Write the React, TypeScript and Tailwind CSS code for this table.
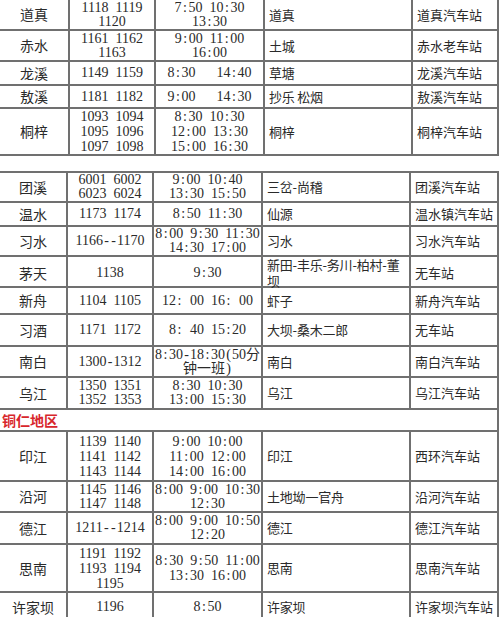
type Row = {
  h: number;
  name: string;
  nums: string[];
  times: string[];
  via: string[];
  station: string;
};

const zunyi: Row[] = [
  { h: 31, name: "道真", nums: ["1118 1119", "1120"], times: ["7:50 10:30", "13:30"], via: ["道真"], station: "道真汽车站" },
  { h: 31, name: "赤水", nums: ["1161 1162", "1163"], times: ["9:00 11:00", "16:00"], via: ["土城"], station: "赤水老车站" },
  { h: 24, name: "龙溪", nums: ["1149 1159"], times: ["8:30   14:40"], via: ["草塘"], station: "龙溪汽车站" },
  { h: 23, name: "敖溪", nums: ["1181 1182"], times: ["9:00   14:30"], via: ["抄乐 松烟"], station: "敖溪汽车站" },
  { h: 47, name: "桐梓", nums: ["1093 1094", "1095 1096", "1097 1098"], times: ["8:30 10:30", "12:00 13:30", "15:00 16:30"], via: ["桐梓"], station: "桐梓汽车站" },
];

const zunyi2: Row[] = [
  { h: 30, name: "团溪", nums: ["6001 6002", "6023 6024"], times: ["9:00 10:40", "13:30 15:50"], via: ["三岔-尚稽"], station: "团溪汽车站" },
  { h: 24, name: "温水", nums: ["1173 1174"], times: ["8:50 11:30"], via: ["仙源"], station: "温水镇汽车站" },
  { h: 30, name: "习水", nums: ["1166--1170"], times: ["8:00 9:30 11:30", "14:30 17:00"], via: ["习水"], station: "习水汽车站" },
  { h: 31, name: "茅天", nums: ["1138"], times: ["9:30"], via: ["新田-丰乐-务川-柏村-董", "坝"], station: "无车站" },
  { h: 27, name: "新舟", nums: ["1104 1105"], times: ["12: 00 16: 00"], via: ["虾子"], station: "新舟汽车站" },
  { h: 32, name: "习酒", nums: ["1171 1172"], times: ["8: 40 15:20"], via: ["大坝-桑木二郎"], station: "无车站" },
  { h: 31, name: "南白", nums: ["1300-1312"], times: ["8:30-18:30(50分", "钟一班)"], via: ["南白"], station: "南白汽车站" },
  { h: 32, name: "乌江", nums: ["1350 1351", "1352 1353"], times: ["8:30 10:30", "13:00 15:30"], via: ["乌江"], station: "乌江汽车站" },
];

const tongren: Row[] = [
  { h: 50, name: "印江", nums: ["1139 1140", "1141 1142", "1143 1144"], times: ["9:00 10:00", "11:00 12:00", "14:00 16:00"], via: ["印江"], station: "西环汽车站" },
  { h: 31, name: "沿河", nums: ["1145 1146", "1147 1148"], times: ["8:00 9:00 10:30", "12:30"], via: ["土地坳一官舟"], station: "沿河汽车站" },
  { h: 32, name: "德江", nums: ["1211--1214"], times: ["8:00 9:00 10:50", "12:20"], via: ["德江"], station: "德江汽车站" },
  { h: 48, name: "思南", nums: ["1191 1192", "1193 1194", "1195"], times: ["8:30 9:50 11:00", "13:30 16:00"], via: ["思南"], station: "思南汽车站" },
  { h: 30, name: "许家坝", nums: ["1196"], times: ["8:50"], via: ["许家坝"], station: "许家坝汽车站" },
];

// digits in Liberation Serif are 7px at 14px; pad the rest to the same width
function Mono({ text }: { text: string }) {
  return (
    <>
      {text.split("").map((ch, i) =>
        /[0-9]/.test(ch) || /[\u4e00-\u9fff]/.test(ch) ? (
          ch
        ) : (
          <span key={i} className="inline-block w-[7px] text-center">
            {ch === " " ? "\u00a0" : ch}
          </span>
        )
      )}
    </>
  );
}

function TableRow({ row, cols }: { row: Row; cols: string }) {
  const cell = "border-r-2 border-[#707070] flex flex-col justify-center whitespace-nowrap";
  const lead = row.nums.length > 2 || row.times.length > 2 ? "leading-[15px]" : "leading-[14px]";
  return (
    <div className={`grid ${cols} border-b-2 border-[#707070]`} style={{ height: row.h }}>
      <div className={`${cell} items-center text-[14px]`}>{row.name}</div>
      <div className={`${cell} items-center font-['Liberation_Serif','Noto_Sans_CJK_SC',serif] text-[14px] ${lead}`}>
        {row.nums.map((n) => (
          <div key={n}>
            <Mono text={n} />
          </div>
        ))}
      </div>
      <div className={`${cell} items-center font-['Liberation_Serif','Noto_Sans_CJK_SC',serif] text-[14px] ${lead}`}>
        {row.times.map((t) => (
          <div key={t}>
            <Mono text={t} />
          </div>
        ))}
      </div>
      <div className={`${cell} pl-[4px] text-[13px] leading-[16px] tracking-[-0.2px]`}>
        <p>
          {row.via.map((v, i) => (
            <span key={v}>
              {i > 0 && <br />}
              {v}
            </span>
          ))}
        </p>
      </div>
      <div className="flex flex-col justify-center pl-[4px] text-[13px] whitespace-nowrap">
        {row.station}
      </div>
    </div>
  );
}

export default function App() {
  const topCols = "grid-cols-[70px_86px_109px_148px_1fr]";
  const cols = "grid-cols-[68px_86px_109px_148px_1fr]";
  return (
    <div className="w-[500px] h-[617px] overflow-hidden bg-white text-[#2a2a2a] font-['Noto_Sans_CJK_SC',sans-serif]">
      <div className="w-[499px] border-r-2 border-[#707070]">
        {zunyi.map((r) => (
          <TableRow key={r.name} row={r} cols={topCols} />
        ))}
      </div>

      <div className="mt-[15px] w-[499px] border-t-2 border-r-2 border-[#707070]">
        {zunyi2.map((r) => (
          <TableRow key={r.name} row={r} cols={cols} />
        ))}
        <div className="h-[22px] flex items-center pl-[2px] border-b-2 border-[#707070] text-[14px] font-bold text-[#d8262c]">
          铜仁地区
        </div>
        {tongren.map((r) => (
          <TableRow key={r.name} row={r} cols={cols} />
        ))}
      </div>
    </div>
  );
}
